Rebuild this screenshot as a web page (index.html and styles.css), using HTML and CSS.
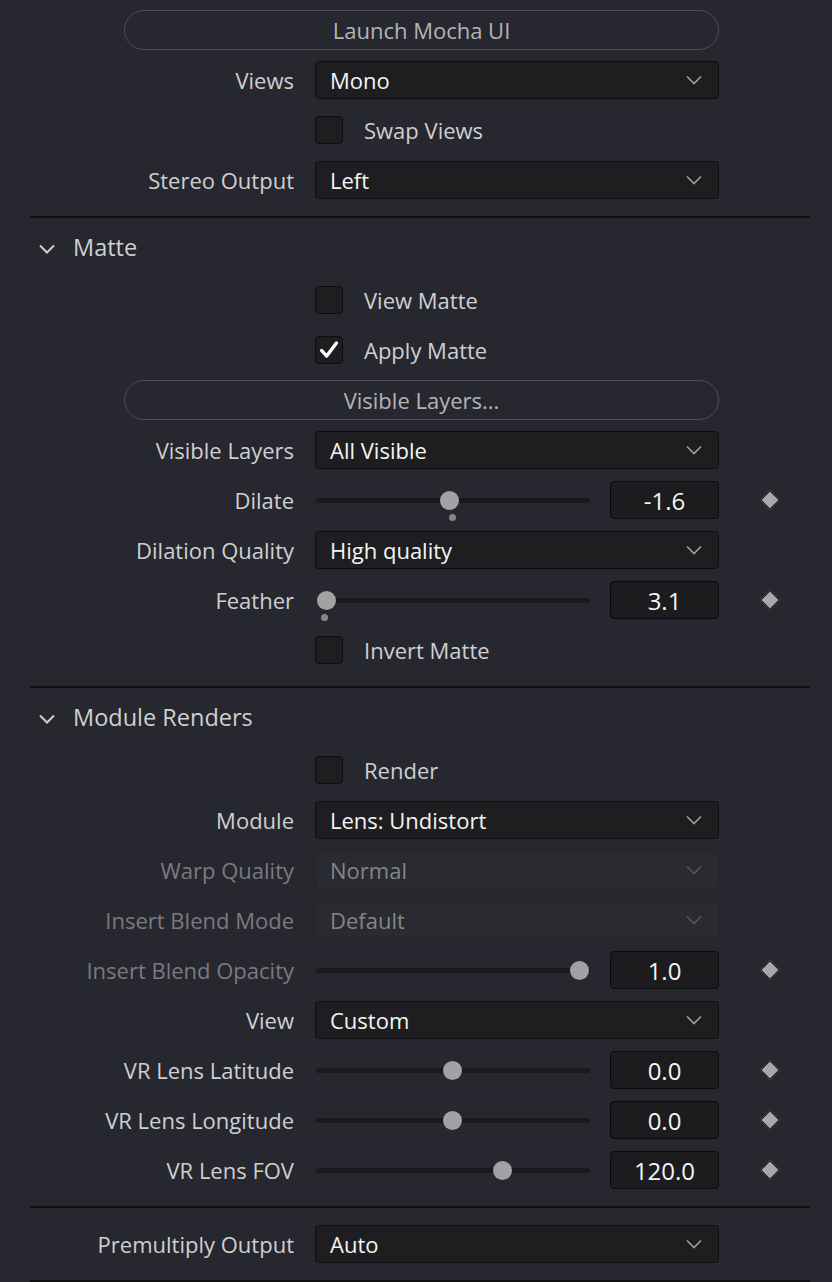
FILE: index.html
```html
<!DOCTYPE html>
<html>
<head>
<meta charset="utf-8">
<link rel="stylesheet" href="styles.css">
</head>
<body>
<div class="panel">
  <div class="row"><div></div><div class="btn wide">Launch Mocha UI</div></div>
  <div class="row"><div class="label">Views</div><div class="select"><span>Mono</span><svg class="chev" viewBox="0 0 16 10"><path d="M1 1.5 L8 8.5 L15 1.5"/></svg></div></div>
  <div class="row"><div></div><label class="check"><span class="box"></span><span>Swap Views</span></label></div>
  <div class="row"><div class="label">Stereo Output</div><div class="select"><span>Left</span><svg class="chev" viewBox="0 0 16 10"><path d="M1 1.5 L8 8.5 L15 1.5"/></svg></div></div>

  <div class="divider"></div>
  <div class="header"><svg class="hchev" viewBox="0 0 16 10"><path d="M1 1.5 L8 8.5 L15 1.5"/></svg><span>Matte</span></div>

  <div class="row"><div></div><label class="check"><span class="box"></span><span>View Matte</span></label></div>
  <div class="row"><div></div><label class="check"><span class="box"><svg viewBox="0 0 28 28"><path d="M6 14.5 L11.5 20.5 L22 6.5"/></svg></span><span>Apply Matte</span></label></div>
  <div class="row"><div></div><div class="btn wide">Visible Layers...</div></div>
  <div class="row"><div class="label">Visible Layers</div><div class="select"><span>All Visible</span><svg class="chev" viewBox="0 0 16 10"><path d="M1 1.5 L8 8.5 L15 1.5"/></svg></div></div>
  <div class="row"><div class="label">Dilate</div>
    <div class="sliderctl"><div class="slider"><div class="track"></div><div class="thumb" style="left:133px"></div><div class="dot" style="left:136px"></div></div><div class="num">-1.6</div></div>
    <div class="kf"><span class="diamond"></span></div></div>
  <div class="row"><div class="label">Dilation Quality</div><div class="select"><span>High quality</span><svg class="chev" viewBox="0 0 16 10"><path d="M1 1.5 L8 8.5 L15 1.5"/></svg></div></div>
  <div class="row"><div class="label">Feather</div>
    <div class="sliderctl"><div class="slider"><div class="track"></div><div class="thumb" style="left:10px"></div><div class="dot" style="left:8px"></div></div><div class="num">3.1</div></div>
    <div class="kf"><span class="diamond"></span></div></div>
  <div class="row"><div></div><label class="check"><span class="box"></span><span>Invert Matte</span></label></div>

  <div class="divider"></div>
  <div class="header"><svg class="hchev" viewBox="0 0 16 10"><path d="M1 1.5 L8 8.5 L15 1.5"/></svg><span>Module Renders</span></div>

  <div class="row"><div></div><label class="check"><span class="box"></span><span>Render</span></label></div>
  <div class="row"><div class="label">Module</div><div class="select"><span>Lens: Undistort</span><svg class="chev" viewBox="0 0 16 10"><path d="M1 1.5 L8 8.5 L15 1.5"/></svg></div></div>
  <div class="row dis"><div class="label">Warp Quality</div><div class="select"><span>Normal</span><svg class="chev" viewBox="0 0 16 10"><path d="M1 1.5 L8 8.5 L15 1.5"/></svg></div></div>
  <div class="row dis"><div class="label">Insert Blend Mode</div><div class="select"><span>Default</span><svg class="chev" viewBox="0 0 16 10"><path d="M1 1.5 L8 8.5 L15 1.5"/></svg></div></div>
  <div class="row"><div class="label muted">Insert Blend Opacity</div>
    <div class="sliderctl"><div class="slider"><div class="track"></div><div class="thumb" style="left:263px"></div></div><div class="num">1.0</div></div>
    <div class="kf"><span class="diamond"></span></div></div>
  <div class="row"><div class="label">View</div><div class="select"><span>Custom</span><svg class="chev" viewBox="0 0 16 10"><path d="M1 1.5 L8 8.5 L15 1.5"/></svg></div></div>
  <div class="row"><div class="label">VR Lens Latitude</div>
    <div class="sliderctl"><div class="slider"><div class="track"></div><div class="thumb" style="left:136px"></div></div><div class="num">0.0</div></div>
    <div class="kf"><span class="diamond"></span></div></div>
  <div class="row"><div class="label">VR Lens Longitude</div>
    <div class="sliderctl"><div class="slider"><div class="track"></div><div class="thumb" style="left:136px"></div></div><div class="num">0.0</div></div>
    <div class="kf"><span class="diamond"></span></div></div>
  <div class="row"><div class="label">VR Lens FOV</div>
    <div class="sliderctl"><div class="slider"><div class="track"></div><div class="thumb" style="left:186px"></div></div><div class="num">120.0</div></div>
    <div class="kf"><span class="diamond"></span></div></div>

  <div class="divider"></div>
  <div class="row spaced"><div class="label">Premultiply Output</div><div class="select"><span>Auto</span><svg class="chev" viewBox="0 0 16 10"><path d="M1 1.5 L8 8.5 L15 1.5"/></svg></div></div>
  <div class="divider"></div>
</div>
</body>
</html>
```
FILE: styles.css
```css
html, body {
  margin: 0;
  padding: 0;
  background: #27272f;
}
body {
  font-family: "Open Sans", "Noto Sans", sans-serif;
  font-size: 22px;
  color: #cfcfd2;
  overflow: hidden;
}
.panel {
  padding-top: 5px;
}
.row {
  display: grid;
  grid-template-columns: 294px 404px 102px;
  column-gap: 21px;
  height: 50px;
  align-items: center;
}
.row.spaced {
  margin-top: 11px;
}
.label {
  text-align: right;
  color: #cfcfd2;
  white-space: nowrap;
}
.muted, .dis .label {
  color: #7a7a80;
}
.btn.wide {
  margin-left: -191px;
  height: 38px;
  border: 1px solid #4d4d55;
  border-radius: 20px;
  display: flex;
  align-items: center;
  justify-content: center;
  color: #b4b4b8;
}
.select {
  height: 36px;
  background: #1e1e20;
  border: 1px solid #0d0d0f;
  border-radius: 4px;
  display: flex;
  align-items: center;
  justify-content: space-between;
  padding: 0 16px 0 14px;
  color: #f4f4f4;
}
.chev {
  width: 16px;
  height: 10px;
  fill: none;
  stroke: #a0a0a4;
  stroke-width: 1.6;
}
.dis .select {
  background: #2a2a31;
  border-color: #232329;
  color: #85858a;
}
.dis .chev {
  stroke: #55555b;
}
.check {
  display: flex;
  align-items: center;
  gap: 21px;
  color: #cfcfd2;
}
.box {
  width: 26px;
  height: 26px;
  background: #1e1e20;
  border: 1px solid #0d0d0f;
  border-radius: 4px;
  display: flex;
}
.box svg {
  width: 26px;
  height: 26px;
  fill: none;
  stroke: #ffffff;
  stroke-width: 3.6;
  stroke-linecap: round;
  stroke-linejoin: round;
}
.divider {
  margin: 11px 22px 0 30px;
  height: 2px;
  background: #101012;
}
.header {
  height: 57px;
  display: flex;
  align-items: center;
  padding-left: 39px;
  gap: 18px;
  font-size: 23.5px;
  color: #cfcfd2;
}
.hchev {
  width: 16px;
  height: 10px;
  margin-top: 4px;
  fill: none;
  stroke: #cfcfd2;
  stroke-width: 2;
}
.sliderctl {
  display: flex;
  align-items: center;
  justify-content: space-between;
}
.slider {
  position: relative;
  width: 274px;
  height: 38px;
  margin-left: 1px;
}
.track {
  position: absolute;
  left: 0;
  right: 0;
  top: 17px;
  height: 5px;
  border-radius: 3px;
  background: #1a1a1c;
}
.thumb {
  position: absolute;
  top: 10px;
  width: 19px;
  height: 19px;
  margin-left: -9.5px;
  border-radius: 50%;
  background: #a2a2a4;
}
.dot {
  position: absolute;
  top: 33px;
  width: 7px;
  height: 7px;
  margin-left: -3.5px;
  border-radius: 50%;
  background: #86868a;
}
.num {
  width: 107px;
  height: 36px;
  background: #1c1c1e;
  border: 1px solid #0b0b0d;
  border-radius: 4px;
  display: flex;
  align-items: center;
  justify-content: center;
  color: #f4f4f4;
  font-size: 24px;
}
.kf {
  display: flex;
  align-items: center;
  padding-left: 23px;
}
.diamond {
  width: 12px;
  height: 12px;
  background: #a8a8ac;
  border: 1px solid #111;
  transform: rotate(45deg);
}
```
